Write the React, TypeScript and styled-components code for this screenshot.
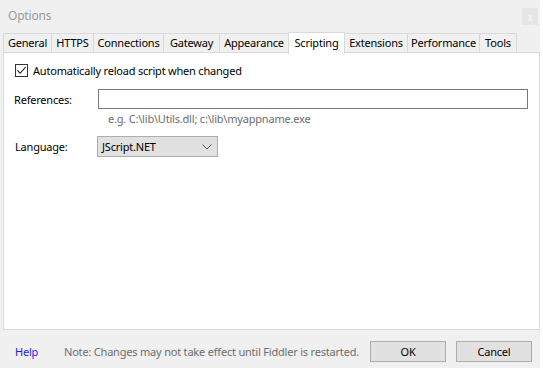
import React from "react";
import styled, { createGlobalStyle } from "styled-components";

const Global = createGlobalStyle`
  html, body { margin: 0; padding: 0; background: #f0f0f0; }
  body {
    font-family: "Noto Sans", "Open Sans", sans-serif;
    font-size: 11px;
    letter-spacing: -0.2px;
    color: #000;
  }
  * { box-sizing: border-box; }
`;

const Window = styled.div`
  width: 543px;
  height: 368px;
  display: flex;
  flex-direction: column;
  background: #f0f0f0;
  border-right: 3px solid #fff;
  overflow: hidden;
`;

const TitleBar = styled.div`
  height: 31px;
  display: flex;
  align-items: center;
  justify-content: space-between;
  padding: 0 2px 0 8px;
`;

const Title = styled.span`
  font-size: 12px;
  color: #9a9a9a;
  margin-top: -1px;
`;

const CloseBox = styled.div`
  width: 16px;
  height: 17px;
  background: #e6e6e6;
  color: #fafafa;
  font-size: 10px;
  display: flex;
  align-items: center;
  justify-content: center;
  margin-top: 2px;
`;

const Body = styled.div`
  padding: 0 0 0 3px;
  display: flex;
  flex-direction: column;
  flex: 1;
`;

const TabStrip = styled.div`
  display: flex;
  align-items: flex-end;
  height: 22px;
  position: relative;
  z-index: 1;
`;

const Tab = styled.div<{ $w: number; $active?: boolean }>`
  width: ${(p) => p.$w}px;
  height: ${(p) => (p.$active ? 22 : 20)}px;
  margin-bottom: ${(p) => (p.$active ? -1 : 0)}px;
  background: ${(p) => (p.$active ? "#fff" : "#f0f0f0")};
  border: 1px solid #d9d9d9;
  border-bottom: ${(p) => (p.$active ? "none" : "1px solid #d9d9d9")};
  margin-right: -1px;
  display: flex;
  align-items: center;
  justify-content: center;
  padding-bottom: ${(p) => (p.$active ? 3 : 1)}px;
  white-space: nowrap;
  position: relative;
  z-index: ${(p) => (p.$active ? 2 : 1)};
`;

const Panel = styled.div`
  width: 537px;
  height: 278px;
  margin-top: -1px;
  background: #fff;
  border: 1px solid #d9d9d9;
  display: flex;
  flex-direction: column;
  padding: 10px 0 0 10px;
`;

const CheckRow = styled.label`
  display: flex;
  align-items: center;
  gap: 5px;
  padding-left: 1px;
  height: 15px;
`;

const CheckBox = styled.span`
  width: 13px;
  height: 13px;
  border: 1px solid #333;
  background: #fff;
  display: flex;
  align-items: center;
  justify-content: center;
`;

const FieldRow = styled.div<{ $top: number }>`
  display: flex;
  align-items: center;
  margin-top: ${(p) => p.$top}px;
`;

const Label = styled.span<{ $w: number; $shift?: number }>`
  width: ${(p) => p.$w}px;
  padding-left: ${(p) => p.$shift ?? 0}px;
  flex: none;
`;

const TextInput = styled.div`
  width: 430px;
  height: 20px;
  border: 1px solid #7a7a7a;
  background: #fff;
`;

const Hint = styled.div`
  margin-top: 1px;
  padding-left: 94px;
  color: #6d6d6d;
  height: 17px;
  display: flex;
  align-items: center;
`;

const Select = styled.div`
  width: 121px;
  height: 21px;
  border: 1px solid #adadad;
  background: #e1e1e1;
  display: flex;
  align-items: center;
  justify-content: space-between;
  padding: 0 5px 0 4px;
`;

const Footer = styled.div`
  flex: 1;
  display: flex;
  align-items: center;
  padding: 4px 8px 0 12px;
  white-space: nowrap;
`;

const HelpLink = styled.a`
  color: #1a1aff;
  text-decoration: none;
  width: 49px;
`;

const Note = styled.span`
  color: #6d6d6d;
  flex: 1;
`;

const Button = styled.div<{ $gap?: number }>`
  width: 76px;
  height: 21px;
  border: 1px solid #adadad;
  background: #e1e1e1;
  display: flex;
  align-items: center;
  justify-content: center;
  margin-left: ${(p) => p.$gap ?? 0}px;
`;

const tabs = [
  { name: "General", w: 49 },
  { name: "HTTPS", w: 43 },
  { name: "Connections", w: 71 },
  { name: "Gateway", w: 57 },
  { name: "Appearance", w: 70 },
  { name: "Scripting", w: 57, active: true },
  { name: "Extensions", w: 64 },
  { name: "Performance", w: 73 },
  { name: "Tools", w: 38 },
];

export default function App() {
  return (
    <>
      <Global />
      <Window>
        <TitleBar>
          <Title>Options</Title>
          <CloseBox>x</CloseBox>
        </TitleBar>
        <Body>
          <TabStrip>
            {tabs.map((t) => (
              <Tab key={t.name} $w={t.w} $active={t.active}>
                {t.name}
              </Tab>
            ))}
          </TabStrip>
          <Panel>
            <CheckRow>
              <CheckBox>
                <svg width="11" height="11" viewBox="0 0 11 11">
                  <path d="M1.5 5.5 L4.2 8.3 L9.5 2.2" fill="none" stroke="#222" strokeWidth="1.1" />
                </svg>
              </CheckBox>
              Automatically reload script when changed
            </CheckRow>
            <FieldRow $top={11}>
              <Label $w={84}>References:</Label>
              <TextInput />
            </FieldRow>
            <Hint>e.g. C:\lib\Utils.dll; c:\lib\myappname.exe</Hint>
            <FieldRow $top={9}>
              <Label $w={83} $shift={1}>Language:</Label>
              <Select>
                <span>JScript.NET</span>
                <svg width="10" height="6" viewBox="0 0 10 6">
                  <path d="M0.5 0.5 L5 5 L9.5 0.5" fill="none" stroke="#555" strokeWidth="1" />
                </svg>
              </Select>
            </FieldRow>
          </Panel>
          <Footer>
            <HelpLink href="#">Help</HelpLink>
            <Note>Note: Changes may not take effect until Fiddler is restarted.</Note>
            <Button>OK</Button>
            <Button $gap={10}>Cancel</Button>
          </Footer>
        </Body>
      </Window>
    </>
  );
}
